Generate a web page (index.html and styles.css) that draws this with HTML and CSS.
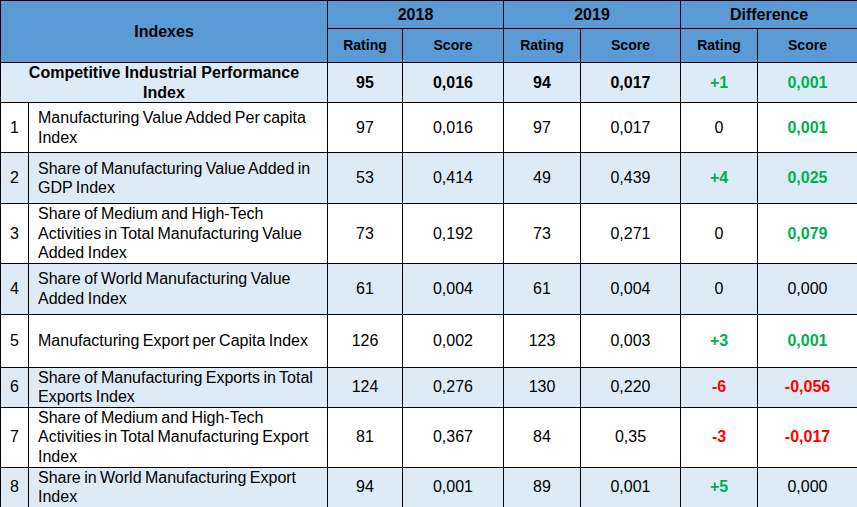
FILE: index.html
```html
<!DOCTYPE html>
<html>
<head>
<meta charset="utf-8">
<link rel="stylesheet" href="styles.css">
</head>
<body>
<table class="tbl">
  <colgroup>
    <col class="c-num"><col class="c-name">
    <col class="c-r18"><col class="c-s18">
    <col class="c-r19"><col class="c-s19">
    <col class="c-rd"><col class="c-sd">
  </colgroup>
  <thead>
    <tr class="h-a">
      <th colspan="2" rowspan="2" class="hd">Indexes</th>
      <th colspan="2" class="hd">2018</th>
      <th colspan="2" class="hd">2019</th>
      <th colspan="2" class="hd">Difference</th>
    </tr>
    <tr class="h-b">
      <th class="sub">Rating</th><th class="sub">Score</th>
      <th class="sub">Rating</th><th class="sub">Score</th>
      <th class="sub">Rating</th><th class="sub">Score</th>
    </tr>
  </thead>
  <tbody>
    <tr class="alt h-cip bold">
      <td colspan="2" class="cip">Competitive Industrial Performance<br>Index</td>
      <td>95</td><td>0,016</td><td>94</td><td>0,017</td>
      <td class="pos">+1</td><td class="pos">0,001</td>
    </tr>
    <tr class="h-50">
      <td class="num">1</td><td class="name">Manufacturing Value Added Per capita<br>Index</td>
      <td>97</td><td>0,016</td><td>97</td><td>0,017</td>
      <td>0</td><td class="pos b">0,001</td>
    </tr>
    <tr class="alt h-51">
      <td class="num">2</td><td class="name">Share of Manufacturing Value Added in<br>GDP Index</td>
      <td>53</td><td>0,414</td><td>49</td><td>0,439</td>
      <td class="pos b">+4</td><td class="pos b">0,025</td>
    </tr>
    <tr class="h-59">
      <td class="num">3</td><td class="name">Share of Medium and High-Tech<br>Activities in Total Manufacturing Value<br>Added Index</td>
      <td>73</td><td>0,192</td><td>73</td><td>0,271</td>
      <td>0</td><td class="pos b">0,079</td>
    </tr>
    <tr class="alt h-51">
      <td class="num">4</td><td class="name">Share of World Manufacturing Value<br>Added Index</td>
      <td>61</td><td>0,004</td><td>61</td><td>0,004</td>
      <td>0</td><td>0,000</td>
    </tr>
    <tr class="h-53">
      <td class="num">5</td><td class="name">Manufacturing Export per Capita Index</td>
      <td>126</td><td>0,002</td><td>123</td><td>0,003</td>
      <td class="pos b">+3</td><td class="pos b">0,001</td>
    </tr>
    <tr class="alt h-40">
      <td class="num">6</td><td class="name">Share of Manufacturing Exports in Total<br>Exports Index</td>
      <td>124</td><td>0,276</td><td>130</td><td>0,220</td>
      <td class="neg b">-6</td><td class="neg b">-0,056</td>
    </tr>
    <tr class="h-60">
      <td class="num">7</td><td class="name">Share of Medium and High-Tech<br>Activities in Total Manufacturing Export<br>Index</td>
      <td>81</td><td>0,367</td><td>84</td><td>0,35</td>
      <td class="neg b">-3</td><td class="neg b">-0,017</td>
    </tr>
    <tr class="alt h-39">
      <td class="num">8</td><td class="name">Share in World Manufacturing Export<br>Index</td>
      <td>94</td><td>0,001</td><td>89</td><td>0,001</td>
      <td class="pos b">+5</td><td>0,000</td>
    </tr>
  </tbody>
</table>
</body>
</html>
```

FILE: styles.css
```css
html, body {
  margin: 0;
  padding: 0;
  background: #ffffff;
}
.tbl {
  border-collapse: collapse;
  table-layout: fixed;
  width: 857px;
  font-family: "Liberation Sans", Arial, sans-serif;
  font-size: 16px;
  color: #000;
}
.c-num { width: 28px; }
.c-name { width: 299px; }
.c-r18 { width: 75px; }
.c-s18 { width: 101px; }
.c-r19 { width: 77px; }
.c-s19 { width: 100px; }
.c-rd { width: 77px; }
.c-sd { width: 100px; }

.tbl th, .tbl td {
  border: 1px solid #000;
  padding: 0 4px;
  text-align: center;
  vertical-align: middle;
  line-height: 19.5px;
}
.tbl th {
  background: #5b9bd5;
  font-weight: bold;
}
.hd { font-size: 16px; }
.sub { font-size: 14px; }

.alt td { background: #ddebf7; }
.bold td { font-weight: bold; }
.cip { line-height: 19px; }

.tbl td.num {
  padding: 0;
}
.tbl td.name {
  text-align: left;
  padding: 0 4px 0 9px;
  word-spacing: -1px;
}
.pos { color: #00b050; }
.neg { color: #ff0000; }
.b { font-weight: bold; }

.h-a { height: 28px; }
.h-b { height: 34px; }
.h-cip { height: 40px; }
.h-50 { height: 50px; }
.h-51 { height: 51px; }
.h-59 { height: 59px; }
.h-53 { height: 53px; }
.h-40 { height: 40px; }
.h-60 { height: 60px; }
.h-39 { height: 39px; }
```
